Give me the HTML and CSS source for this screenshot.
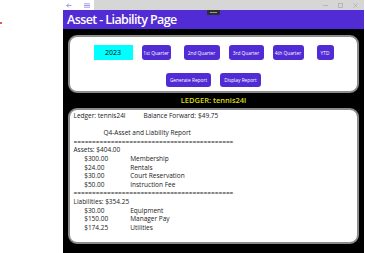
FILE: index.html
```html
<!DOCTYPE html>
<html lang="en">
<head>
    <meta charset="UTF-8">
    <meta name="viewport" content="width=device-width, initial-scale=1.0">
    <title>Asset - Liability Page</title>
    <link rel="stylesheet" href="styles.css">
</head>
<body>
    <div class="gutter"><span class="dot"></span></div>

    <div class="window">
        <div class="titlebar">
            <div class="nav">
                <svg width="6" height="5" viewBox="0 0 6 5"><path d="M5.5 2.5H0.8M2.8 0.5L0.8 2.5L2.8 4.5" fill="none" stroke="#8c80e6" stroke-width="0.8"/></svg>
                <svg width="6" height="5" viewBox="0 0 6 5"><path d="M0 0.8H6M0 2.5H6M0 4.2H6" fill="none" stroke="#8c80e6" stroke-width="0.8"/></svg>
            </div>
            <div class="drag">
                <svg width="5" height="5" viewBox="0 0 5 5"><path d="M0 2.5H5" stroke="#a8a8a8" stroke-width="0.7"/></svg>
                <svg width="5" height="5" viewBox="0 0 5 5"><rect x="0.5" y="0.5" width="4" height="4" fill="none" stroke="#a8a8a8" stroke-width="0.7"/></svg>
                <svg width="5" height="5" viewBox="0 0 5 5"><path d="M0.5 0.5L4.5 4.5M4.5 0.5L0.5 4.5" stroke="#a8a8a8" stroke-width="0.7"/></svg>
            </div>
        </div>

        <div class="header">
            <h1>Asset - Liability Page</h1>
            <span class="grip"></span>
        </div>

        <div class="content">
            <div class="card controls">
                <div class="row quarters">
                    <div class="year">2023</div>
                    <button class="q1">1st Quarter</button>
                    <button class="q2 spaced">2nd Quarter</button>
                    <button class="q3">3rd Quarter</button>
                    <button class="q4">4th Quarter</button>
                    <button class="ytd spaced">YTD</button>
                </div>
                <div class="row reports">
                    <button class="generate">Generate Report</button>
                    <button class="display">Display Report</button>
                </div>
            </div>

            <div class="ledger-title">LEDGER: tennis24l</div>

            <div class="card report">
                <div class="line"><span class="col-a">Ledger: tennis24l</span><span class="col-b">Balance Forward:</span>$49.75</div>
                <div class="line">&nbsp;</div>
                <div class="line indent">Q4-Asset and Liability Report</div>
                <div class="line">===========================================</div>
                <div class="line">Assets: $404.00</div>
                <div class="line item"><span class="amt">$300.00</span>Membership</div>
                <div class="line item"><span class="amt">$24.00</span>Rentals</div>
                <div class="line item"><span class="amt">$30.00</span>Court Reservation</div>
                <div class="line item"><span class="amt">$50.00</span>Instruction Fee</div>
                <div class="line">===========================================</div>
                <div class="line">Liabilities: $354.25</div>
                <div class="line item"><span class="amt">$30.00</span>Equipment</div>
                <div class="line item"><span class="amt">$150.00</span>Manager Pay</div>
                <div class="line item"><span class="amt">$174.25</span>Utilities</div>
            </div>
        </div>
    </div>
</body>
</html>
```

FILE: styles.css
```css
body {
    margin: 0;
    height: 253px;
    display: flex;
    background: #fff;
    font-family: "Open Sans", "Noto Sans", sans-serif;
    overflow: hidden;
}

.gutter {
    width: 63px;
    padding-top: 22px;
}

.dot {
    display: block;
    width: 2px;
    height: 2px;
    background: #f05050;
}

.window {
    width: 301px;
    display: flex;
    flex-direction: column;
}

.titlebar {
    height: 10px;
    display: flex;
}

.nav {
    width: 31px;
    background: #fff;
    display: flex;
    align-items: center;
    gap: 12px;
    padding-left: 3px;
    box-sizing: border-box;
}

.drag {
    flex: 1;
    background: #d6d6d6;
    display: flex;
    align-items: center;
    justify-content: flex-end;
    gap: 10px;
    padding-right: 6px;
}

.header {
    position: relative;
    height: 19px;
    background: #512bd4;
    display: flex;
    align-items: center;
}

h1 {
    margin: 0 0 0 4px;
    color: #fff;
    font-size: 12.5px;
    font-weight: 600;
    letter-spacing: -0.6px;
}

.grip {
    position: absolute;
    top: 0;
    left: 144px;
    width: 13px;
    height: 5px;
    background: #2e2e2e;
    border-radius: 0 0 1px 1px;
}

.grip::after {
    content: "";
    position: absolute;
    left: 3px;
    top: 2px;
    width: 7px;
    height: 1px;
    background: #999;
}

.content {
    flex: 1;
    background: #000;
    padding: 6px 5px 0 5px;
}

.card {
    background: #fff;
    border: 2px solid #8c8c8c;
    border-radius: 9px;
}

.controls {
    height: 58px;
    box-sizing: border-box;
    padding-top: 8px;
}

.row {
    display: flex;
    justify-content: center;
    gap: 9px;
}

.quarters {
    height: 15px;
    margin-bottom: 12.5px;
}

.reports {
    height: 14.5px;
}

.row button {
    padding: 0;
    border: none;
    border-radius: 3px;
    background: #512bd4;
    color: #fff;
    font-family: inherit;
    font-size: 4.8px;
    white-space: nowrap;
}

.row button.spaced {
    margin-left: 4px;
}

.q1 { width: 29px; }
.q2 { width: 36px; }
.q3 { width: 35px; }
.q4 { width: 31px; }
.ytd { width: 17px; }
.generate { width: 45px; }
.display { width: 41px; }

.year {
    width: 39px;
    background: #00ffff;
    color: #000;
    font-size: 7px;
    display: flex;
    align-items: center;
    justify-content: center;
}

.ledger-title {
    height: 15px;
    line-height: 15px;
    text-align: center;
    color: #dede10;
    font-size: 7.5px;
    font-weight: 600;
}

.report {
    height: 136px;
    box-sizing: border-box;
    margin-left: -0.5px;
    padding: 2px 0 0 4px;
    font-size: 6.5px;
    color: #222;
}

.line {
    height: 8.6px;
    line-height: 8.6px;
    white-space: nowrap;
}

.col-a {
    display: inline-block;
    width: 70px;
}

.col-b {
    display: inline-block;
    width: 54.5px;
}

.indent {
    padding-left: 30px;
}

.item {
    padding-left: 10.7px;
}

.amt {
    display: inline-block;
    width: 46px;
}
```
